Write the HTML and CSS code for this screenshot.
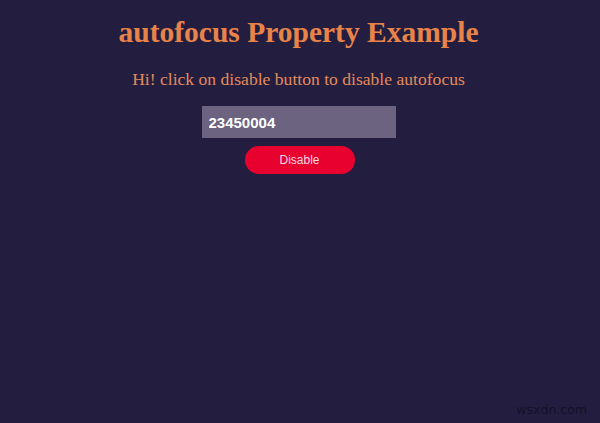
FILE: index.html
```html
<!DOCTYPE html>
<html>
<head>
<meta charset="utf-8">
<link rel="stylesheet" href="styles.css">
</head>
<body>
<main class="page">
  <h1 class="title">autofocus Property Example</h1>
  <p class="subtitle">Hi! click on disable button to disable autofocus</p>
  <input class="field" type="text" value="23450004">
  <button class="btn">Disable</button>
</main>
<div class="watermark">wsxdn.com</div>
</body>
</html>
```
FILE: styles.css
```css
html, body {
  margin: 0;
  padding: 0;
  height: 100%;
}
body {
  background: #231e3f;
  font-family: "Liberation Serif", serif;
  position: relative;
  overflow: hidden;
}
.page {
  display: flex;
  flex-direction: column;
  align-items: center;
  padding-top: 15px;
  padding-right: 3px;
}
.title {
  margin: 0;
  font-size: 29.5px;
  font-weight: bold;
  color: #e8834a;
  line-height: 34px;
}
.subtitle {
  margin: 19px 0 0;
  font-size: 17.6px;
  color: #e28a5c;
  line-height: 22px;
}
.field {
  margin-top: 16px;
  width: 194px;
  height: 32px;
  box-sizing: border-box;
  border: none;
  outline: none;
  background: #6b6380;
  color: #fff;
  font-family: "Liberation Sans", Arial, sans-serif;
  font-weight: bold;
  font-size: 15px;
  padding: 0 7px;
}
.btn {
  margin-top: 8px;
  margin-left: 2px;
  width: 110px;
  height: 28px;
  border: none;
  border-radius: 14px;
  background: #e8002f;
  color: #f4d8e2;
  font-family: "Liberation Sans", Arial, sans-serif;
  font-size: 12px;
}
.watermark {
  position: absolute;
  right: 13px;
  bottom: 6px;
  font-family: "DejaVu Sans", sans-serif;
  font-size: 12.5px;
  color: #141028;
}
```
